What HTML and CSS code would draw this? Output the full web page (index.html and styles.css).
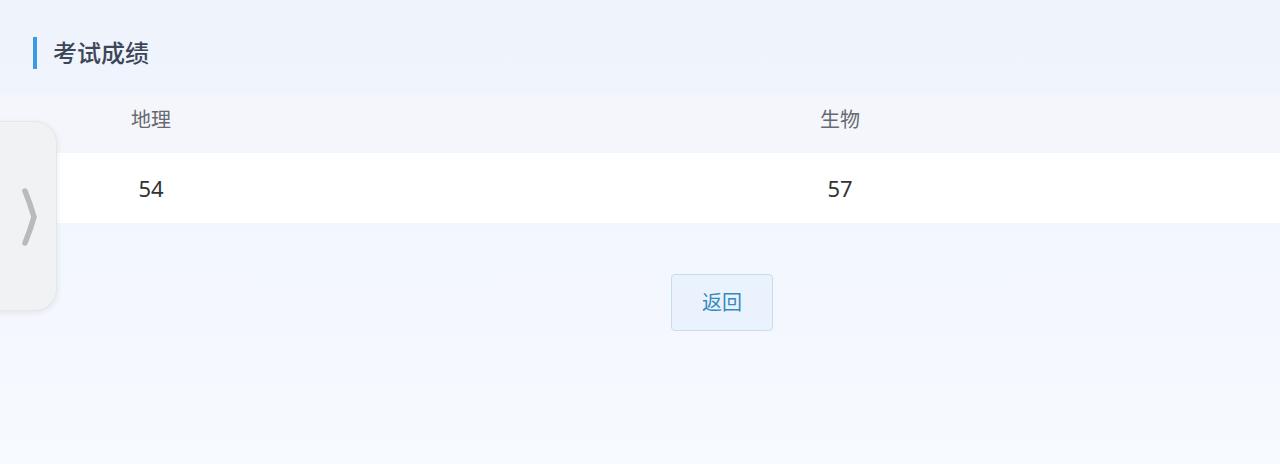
FILE: index.html
```html
<!DOCTYPE html>
<html lang="zh-CN">

<head>
    <meta charset="UTF-8">
    <meta name="viewport" content="width=device-width, initial-scale=1.0">
    <title>考试成绩</title>
    <link rel="stylesheet" href="styles.css">
</head>

<body>
    <div class="page">
        <div class="section-title">考试成绩</div>
        <div class="score-table">
            <div class="row head">
                <div class="cell">地理</div>
                <div class="cell">生物</div>
            </div>
            <div class="row body">
                <div class="cell">54</div>
                <div class="cell">57</div>
            </div>
        </div>
        <div class="actions">
            <div class="back-btn">返回</div>
        </div>
    </div>
    <!-- 侧边栏展开按钮 -->
    <div class="side-toggle">
        <svg width="20" height="64" viewBox="0 0 20 64">
            <path d="M5 6 Q10 18 14 32 Q10 46 5 58" fill="none" stroke="#bababa" stroke-width="5.5" stroke-linecap="round" />
        </svg>
    </div>
</body>

</html>
```

FILE: styles.css
```css
* {
    margin: 0;
    padding: 0;
    box-sizing: border-box;
}

body {
    width: 1280px;
    height: 464px;
    overflow: hidden;
    position: relative;
    font-family: "Noto Sans", "Noto Sans CJK SC", sans-serif;
    background: linear-gradient(180deg, #eef3fc 0%, #f3f7fe 55%, #f7faff 100%);
}

.page {
    padding-top: 37px;
}

.section-title {
    margin-left: 33px;
    height: 32px;
    line-height: 32px;
    padding-left: 16px;
    border-left: 4px solid #3b9ae1;
    font-size: 24px;
    font-weight: 500;
    color: #3d4658;
}

.score-table {
    margin-top: 26px;
    overflow: hidden;
}

.row {
    display: grid;
    grid-template-columns: 302px 1076px;
}

.row.head {
    height: 58px;
    background: #f4f6fc;
    color: #666a70;
    font-size: 20px;
}

.row.body {
    height: 70px;
    background: #fff;
    color: #333;
    font-size: 22px;
}

.cell {
    display: flex;
    align-items: center;
    justify-content: center;
}

.row.head .cell {
    padding-bottom: 12px;
}

.actions {
    display: flex;
    justify-content: center;
    padding-left: 164px;
    margin-top: 51px;
}

.back-btn {
    width: 102px;
    height: 57px;
    line-height: 55px;
    text-align: center;
    border: 1px solid #c8dcec;
    border-radius: 4px;
    background: #eaf3fd;
    color: #3889c0;
    font-size: 20px;
}

.side-toggle {
    position: absolute;
    left: -30px;
    top: 121px;
    width: 87px;
    height: 190px;
    border-radius: 22px;
    background: #f1f2f4;
    border: 1px solid #e4e6ea;
    box-shadow: 0 2px 6px rgba(0, 0, 0, 0.08);
    display: flex;
    align-items: center;
    padding-left: 49px;
}

.side-toggle svg {
    margin-top: 2px;
}
```
